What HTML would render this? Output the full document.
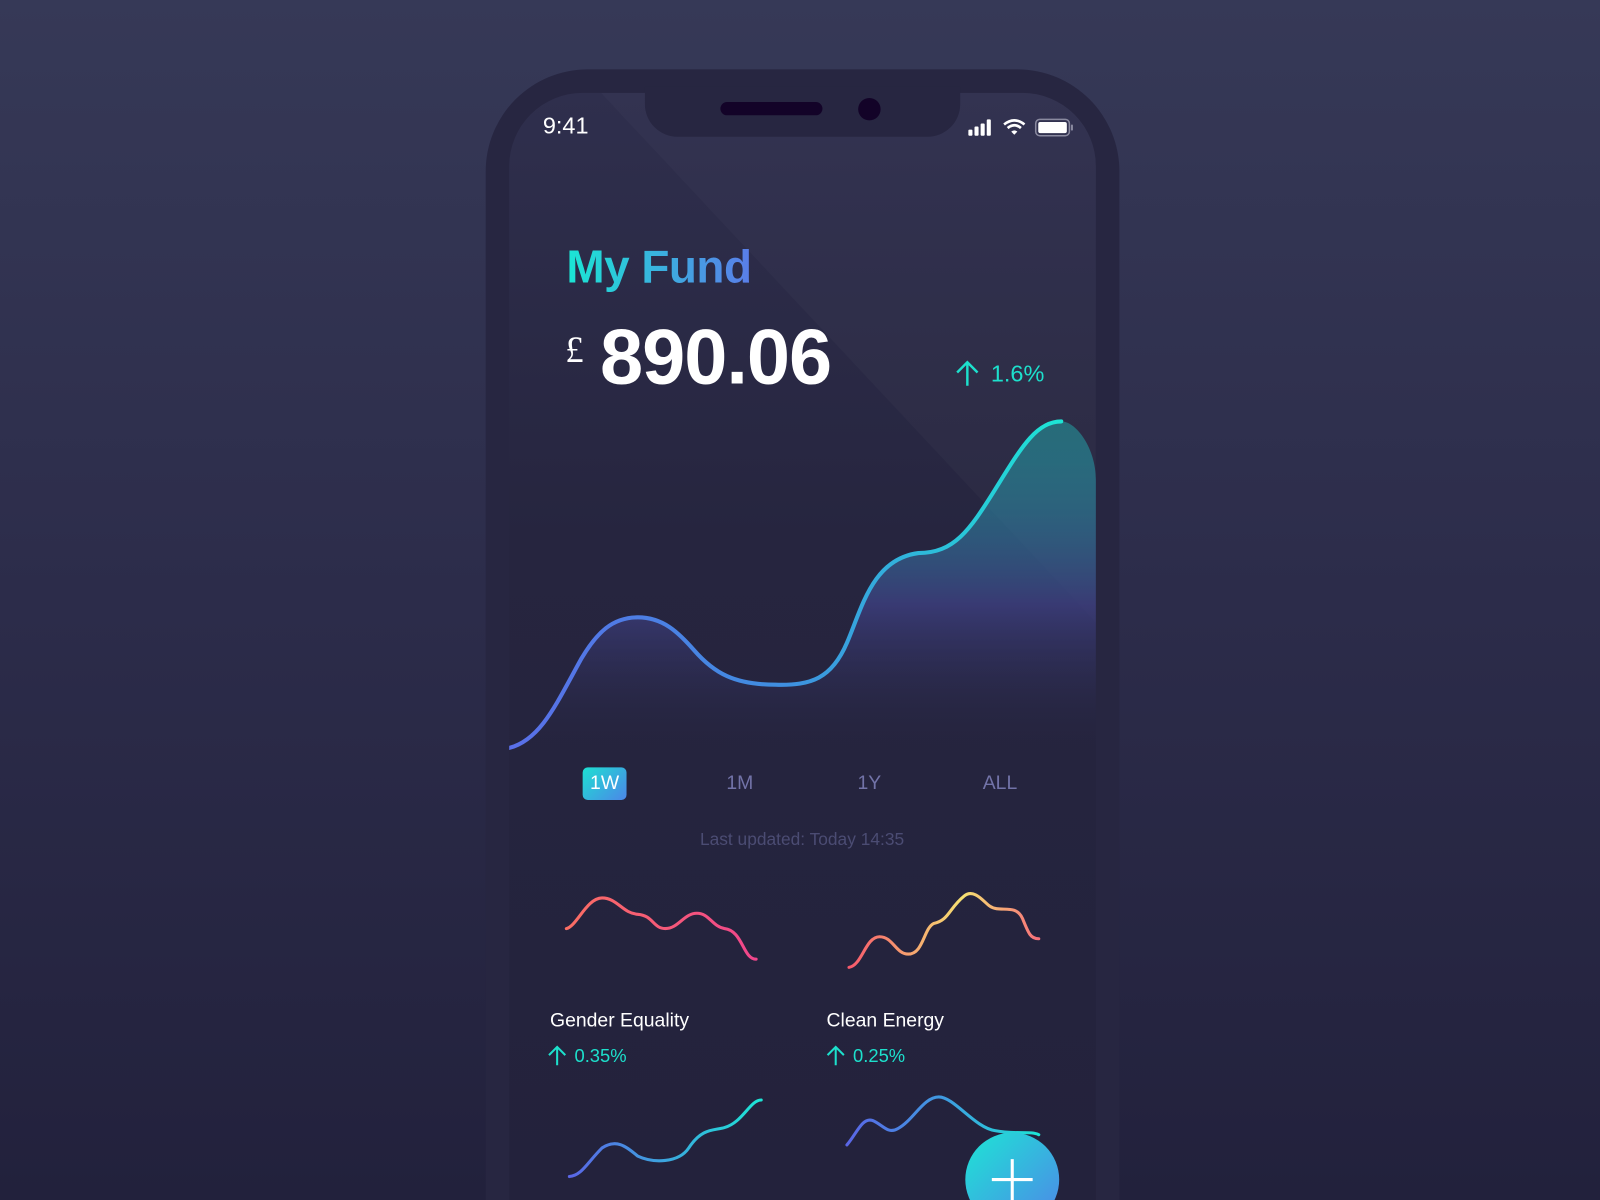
<!DOCTYPE html>
<html><head><meta charset="utf-8"><style>
html,body{margin:0;padding:0;width:1600px;height:1200px;overflow:hidden;background:linear-gradient(180deg,#363957 0%,#2c2c4a 50%,#22213c 100%);font-family:"Liberation Sans",sans-serif}
#w{position:absolute;left:0;top:0;width:1568px;height:1176px;overflow:hidden;transform:scale(1.020408);transform-origin:0 0}
.abs{position:absolute}
</style></head><body><div id="w">
<div class="abs" style="left:476px;top:68px;width:621px;height:1108px;border-radius:100px 100px 0 0;background:#272641"></div>
<div class="abs" style="left:499px;top:91px;width:575px;height:1085px;border-radius:72px 72px 0 0;overflow:hidden;background:linear-gradient(180deg,#2f2f4d 0%,#26253f 40%,#23223c 100%)">
  <svg class="abs" style="left:0;top:0" width="575" height="600"><polygon points="90,0 575,0 575,519" fill="#ffffff" fill-opacity="0.022"/></svg>
</div>
<div class="abs" style="left:632px;top:85px;width:309px;height:49px;background:#272641;border-radius:0 0 32px 32px"></div>
<div class="abs" style="left:706px;top:100px;width:100px;height:13px;border-radius:7px;background:#130328"></div>
<div class="abs" style="left:841px;top:96px;width:22px;height:22px;border-radius:50%;background:#130328"></div>
<div class="abs" style="left:532px;top:110px;color:#fff;font-size:23px">9:41</div>
<svg class="abs" style="left:940px;top:112px" width="120" height="26">
 <rect x="9" y="15" width="4" height="6" rx="1" fill="#fff"/><rect x="15" y="12" width="4" height="9" rx="1" fill="#fff"/><rect x="21" y="9" width="4" height="12" rx="1" fill="#fff"/><rect x="27" y="5" width="4" height="16" rx="1" fill="#fff"/>
 <path d="M44 10 Q54 2 64 10" stroke="#fff" stroke-width="2.6" fill="none"/><path d="M47.5 13.5 Q54 8 60.5 13.5" stroke="#fff" stroke-width="2.6" fill="none"/><path d="M51 17 L54 20 L57 17 Q54 14.5 51 17Z" fill="#fff"/>
 <rect x="75" y="5" width="33" height="16" rx="4" stroke="#8a8aa0" stroke-width="1.5" fill="none"/><rect x="77.5" y="7.5" width="28" height="11" rx="2" fill="#fff"/><rect x="109.5" y="10" width="2" height="6" rx="1" fill="#8a8aa0"/>
</svg>
<div class="abs" style="left:555px;top:236px;font-size:45px;font-weight:bold;background:linear-gradient(90deg,#1ae6d4,#5a7de9);-webkit-background-clip:text;background-clip:text;color:transparent;letter-spacing:-0.5px">My Fund</div>
<div class="abs" style="left:554px;top:322px;color:#fff;font-size:36px;font-family:'Liberation Serif',serif">£</div>
<div class="abs" style="left:588px;top:307px;color:#fff;font-size:76px;font-weight:bold;letter-spacing:-1px">890.06</div>
<svg class="abs" style="left:934px;top:352px" width="30" height="28"><path d="M14 26V3M4 13L14 3L24 13" stroke="#1de0cc" stroke-width="2.4" fill="none"/></svg>
<div class="abs" style="left:971px;top:353px;color:#1de0cc;font-size:23px">1.6%</div>
<svg class="abs" style="left:0;top:0" width="1568" height="1176">
 <defs>
  <linearGradient id="ln" x1="499" y1="0" x2="1040" y2="0" gradientUnits="userSpaceOnUse"><stop offset="0" stop-color="#5a6fe8"/><stop offset="0.5" stop-color="#3f8fe0"/><stop offset="1" stop-color="#1de5d5"/></linearGradient>
  <linearGradient id="ar" x1="0" y1="413" x2="0" y2="740" gradientUnits="userSpaceOnUse"><stop offset="0" stop-color="#1ec9c4" stop-opacity="0.4"/><stop offset="0.55" stop-color="#3d3f80" stop-opacity="0.8"/><stop offset="1" stop-color="#26253f" stop-opacity="0"/></linearGradient>
  <linearGradient id="g1" x1="555" y1="0" x2="741" y2="0" gradientUnits="userSpaceOnUse"><stop offset="0" stop-color="#fb6e64"/><stop offset="1" stop-color="#f0468c"/></linearGradient>
  <linearGradient id="g2" x1="832" y1="0" x2="1018" y2="0" gradientUnits="userSpaceOnUse"><stop offset="0" stop-color="#f7596c"/><stop offset="0.6" stop-color="#f6e272"/><stop offset="1" stop-color="#f7707a"/></linearGradient>
  <linearGradient id="g3" x1="558" y1="0" x2="746" y2="0" gradientUnits="userSpaceOnUse"><stop offset="0" stop-color="#5a66e6"/><stop offset="1" stop-color="#1de5d5"/></linearGradient>
  <linearGradient id="g4" x1="830" y1="0" x2="1018" y2="0" gradientUnits="userSpaceOnUse"><stop offset="0" stop-color="#5a66e6"/><stop offset="0.5" stop-color="#3f9ae0"/><stop offset="1" stop-color="#1de5d5"/></linearGradient>
  <linearGradient id="fab" x1="0" y1="0" x2="1" y2="1"><stop offset="0" stop-color="#1de5d5"/><stop offset="1" stop-color="#4f85e8"/></linearGradient>
  <clipPath id="sc"><rect x="499" y="91" width="575" height="1100" rx="72"/></clipPath>
 </defs>
 <g clip-path="url(#sc)">
 <path d="M499,733 C530,725 545,690 570,645 C585,620 600,605 625,605 C650,605 665,620 680,637 C700,660 720,671 760,671 C795,672 815,665 830,630 C845,595 855,548 900,542 C935,542 950,520 975,480 C1000,440 1015,413 1040,413 C1055,413 1074,440 1074,470 L1074,740 L499,740Z" fill="url(#ar)"/>
 <path d="M499,733 C530,725 545,690 570,645 C585,620 600,605 625,605 C650,605 665,620 680,637 C700,660 720,671 760,671 C795,672 815,665 830,630 C845,595 855,548 900,542 C935,542 950,520 975,480 C1000,440 1015,413 1040,413" stroke="url(#ln)" stroke-width="4" fill="none" stroke-linecap="round"/>
 </g>
 <path d="M555,910 C565,908 575,880 590,880 C605,880 610,895 625,896 C640,897 640,910 652,910 C665,910 670,895 683,895 C695,895 698,908 710,910 C728,912 728,940 741,940" stroke="url(#g1)" stroke-width="3" fill="none" stroke-linecap="round"/>
 <path d="M832,948 C845,946 848,918 862,918 C875,918 878,935 890,935 C905,935 905,910 915,905 C930,902 930,890 945,878 C955,870 965,885 970,888 C980,895 995,885 1002,900 C1008,915 1010,920 1018,920" stroke="url(#g2)" stroke-width="3" fill="none" stroke-linecap="round"/>
 <path d="M558,1153 C570,1152 575,1140 590,1125 C605,1115 615,1125 625,1133 C640,1140 665,1140 675,1125 C688,1105 700,1108 710,1105 C728,1100 735,1078 746,1078" stroke="url(#g3)" stroke-width="3" fill="none" stroke-linecap="round"/>
 <path d="M830,1122 C840,1110 845,1095 855,1098 C865,1102 870,1112 880,1106 C895,1098 905,1075 920,1075 C935,1075 955,1105 975,1108 C995,1112 1010,1108 1018,1112" stroke="url(#g4)" stroke-width="3" fill="none" stroke-linecap="round"/>
 <circle cx="992" cy="1156" r="46" fill="url(#fab)"/>
 <path d="M992,1136V1176M972,1156H1012" stroke="#fff" stroke-width="3"/>
 <path d="M546,1044V1026M538,1034L546,1026L554,1034" stroke="#1de0cc" stroke-width="2" fill="none"/>
 <path d="M819,1044V1026M811,1034L819,1026L827,1034" stroke="#1de0cc" stroke-width="2" fill="none"/>
</svg>
<div class="abs" style="left:571px;top:752px;width:43px;height:32px;border-radius:5px;background:linear-gradient(135deg,#1de0d2,#4c86e8)"></div>
<div class="abs" style="left:571px;top:757px;width:43px;text-align:center;color:#fff;font-size:19px">1W</div>
<div class="abs" style="left:690px;top:757px;width:70px;text-align:center;color:#7273a8;font-size:19px">1M</div>
<div class="abs" style="left:817px;top:757px;width:70px;text-align:center;color:#7273a8;font-size:19px">1Y</div>
<div class="abs" style="left:945px;top:757px;width:70px;text-align:center;color:#7273a8;font-size:19px">ALL</div>
<div class="abs" style="left:600px;top:813px;width:372px;text-align:center;color:#4b4c73;font-size:17px">Last updated: Today 14:35</div>
<div class="abs" style="left:539px;top:990px;color:#fff;font-size:19px">Gender Equality</div>
<div class="abs" style="left:810px;top:990px;color:#fff;font-size:19px">Clean Energy</div>
<div class="abs" style="left:563px;top:1025px;color:#1de0cc;font-size:18px">0.35%</div>
<div class="abs" style="left:836px;top:1025px;color:#1de0cc;font-size:18px">0.25%</div>
</div></body></html>
